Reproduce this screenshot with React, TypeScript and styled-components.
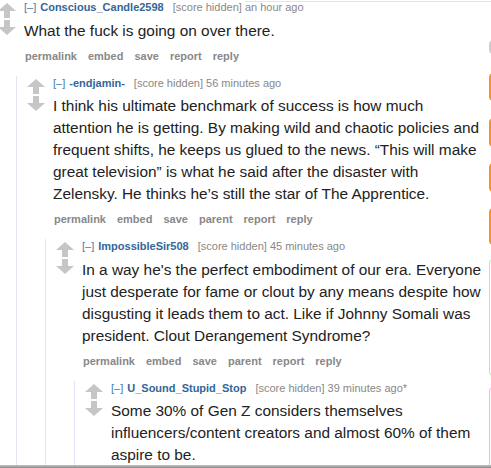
import React from 'react';
import styled, { createGlobalStyle } from 'styled-components';

const Global = createGlobalStyle`
  html, body { margin: 0; padding: 0; background: #fff; overflow: hidden; }
  body { font-family: "Liberation Sans", Arial, sans-serif; }
`;

const Page = styled.div`
  position: relative;
  width: 491px;
  height: 468px;
  overflow: hidden;
  background: #fff;
`;

const Thread = styled.div`
  width: 488px;
  margin-left: -2px;
`;

const CommentBox = styled.div`
  display: flex;
  flex-direction: column;
`;

const Row = styled.div`
  display: flex;
  align-items: flex-start;
`;

const Midcol = styled.div`
  flex: 0 0 18px;
  margin-right: 8px;
  padding-top: 3px;
  display: flex;
  flex-direction: column;
  gap: 2px;
`;

const ArrowSvg = styled.svg`
  display: block;
  width: 18px;
  height: 15px;
`;

const Entry = styled.div`
  flex: 1;
  min-width: 0;
`;

const Tagline = styled.div`
  font-size: 11px;
  line-height: 15px;
  color: #888;
  white-space: nowrap;
`;

const Expand = styled.span`
  color: #4b79a8;
  margin-right: 4px;
`;

const Author = styled.span`
  color: #369;
  font-weight: bold;
  margin-right: 9px;
`;

const Body = styled.div`
  margin-top: 4.5px;
  font-size: 15.4px;
  line-height: 22px;
  color: #222;
`;

const Buttons = styled.ul`
  list-style: none;
  margin: 7px 0 0;
  padding: 0 0 0 1px;
  display: flex;
  gap: 11px;
  font-size: 11px;
  line-height: 15px;
  font-weight: bold;
  color: #888;
`;

const Child = styled.div`
  margin-left: 18px;
  margin-top: 12px;
  border-left: 1px solid #e3e3f5;
  padding-left: 10px;
`;

/* fragments of neighbouring widgets peeking in at the right edge */
const EdgeColumn = styled.div`
  position: absolute;
  top: 0;
  left: 489px;
  display: flex;
  flex-direction: column;
`;

const EdgeTab = styled.div<{ $space: number; $height: number; $color: string; $filled?: boolean }>`
  margin-top: ${(p) => p.$space}px;
  height: ${(p) => p.$height}px;
  width: 10px;
  box-sizing: border-box;
  border-radius: 4px;
  background: ${(p) => (p.$filled ? p.$color : '#fff')};
  border: 1px solid ${(p) => p.$color};
`;

const TopRule = styled.div`
  position: absolute;
  top: 1px;
  left: 245px;
  right: 0;
  height: 1px;
  background: #e6e6e6;
`;

const BottomBar = styled.div`
  position: absolute;
  left: 0;
  right: 0;
  bottom: 0;
  height: 3px;
  background: linear-gradient(#c4c4c4, #8a8a8a);
`;

const Arrow = ({ down }: { down?: boolean }) => (
  <ArrowSvg viewBox="0 0 18 15">
    <path
      d={down ? 'M6 0H12V7H18L9 15L0 7H6Z' : 'M9 0L18 8H12V15H6V8H0Z'}
      fill="#c6c6c6"
    />
  </ArrowSvg>
);

type C = {
  author: string;
  time: string;
  body: string;
  buttons?: string[];
  child?: C;
};

const data: C = {
  author: 'Conscious_Candle2598',
  time: 'an hour ago',
  body: 'What the fuck is going on over there.',
  buttons: ['permalink', 'embed', 'save', 'report', 'reply'],
  child: {
    author: '-endjamin-',
    time: '56 minutes ago',
    body:
      'I think his ultimate benchmark of success is how much attention he is getting. By making wild and chaotic policies and frequent shifts, he keeps us glued to the news. \u201CThis will make great television\u201D is what he said after the disaster with Zelensky. He thinks he\u2019s still the star of The Apprentice.',
    buttons: ['permalink', 'embed', 'save', 'parent', 'report', 'reply'],
    child: {
      author: 'ImpossibleSir508',
      time: '45 minutes ago',
      body:
        "In a way he's the perfect embodiment of our era. Everyone just desperate for fame or clout by any means despite how disgusting it leads them to act. Like if Johnny Somali was president. Clout Derangement Syndrome?",
      buttons: ['permalink', 'embed', 'save', 'parent', 'report', 'reply'],
      child: {
        author: 'U_Sound_Stupid_Stop',
        time: '39 minutes ago*',
        body:
          'Some 30% of Gen Z considers themselves influencers/content creators and almost 60% of them aspire to be.',
      },
    },
  },
};

const Comment = ({ c }: { c: C }) => (
  <CommentBox>
    <Row>
      <Midcol>
        <Arrow />
        <Arrow down />
      </Midcol>
      <Entry>
        <Tagline>
          <Expand>[–]</Expand>
          <Author>{c.author}</Author>
          <span>[score hidden] {c.time}</span>
        </Tagline>
        <Body>{c.body}</Body>
        {c.buttons && (
          <Buttons>
            {c.buttons.map((b) => (
              <li key={b}>{b}</li>
            ))}
          </Buttons>
        )}
      </Entry>
    </Row>
    {c.child && (
      <Child>
        <Comment c={c.child} />
      </Child>
    )}
  </CommentBox>
);

export default function App() {
  return (
    <Page>
      <Global />
      <Thread>
        <Comment c={data} />
      </Thread>
      <TopRule />
      <EdgeColumn>
        <EdgeTab $space={40} $height={14} $color="#cfcfcf" $filled />
        <EdgeTab $space={19} $height={28} $color="#f7931e" $filled />
        <EdgeTab $space={17} $height={29} $color="#f7931e" $filled />
        <EdgeTab $space={16} $height={29} $color="#f7931e" $filled />
        <EdgeTab $space={16} $height={37} $color="#f7931e" $filled />
        <EdgeTab $space={14} $height={117} $color="#b6eea6" />
        <EdgeTab $space={11} $height={90} $color="#f2b2f2" />
      </EdgeColumn>
      <BottomBar />
    </Page>
  );
}
